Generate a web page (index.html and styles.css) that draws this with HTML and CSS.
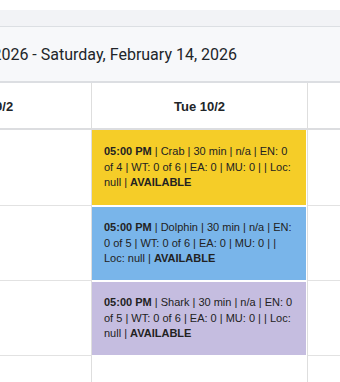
FILE: index.html
```html
<!DOCTYPE html>
<html>
<head>
<meta charset="utf-8">
<link rel="stylesheet" href="styles.css">
</head>
<body>
<div class="toolbar"></div>
<div class="titlebar"><span class="title">Sunday, February 8, 2026 - Saturday, February 14, 2026</span></div>
<div class="calendar">
  <div class="row head">
    <div class="cell c1">Mon 9/2</div>
    <div class="cell c2">Tue 10/2</div>
    <div class="cell c3">Wed 11/2</div>
  </div>
  <div class="row body first">
    <div class="cell c1"></div>
    <div class="cell c2 slot">
      <div class="event crab"><p><b>05:00 PM</b> | Crab | 30 min | n/a | EN: 0 of 4 | WT: 0 of 6 | EA: 0 | MU: 0 | | Loc: null | <b>AVAILABLE</b></p></div>
    </div>
    <div class="cell c3"></div>
  </div>
  <div class="row body">
    <div class="cell c1"></div>
    <div class="cell c2 slot">
      <div class="event dolphin"><p><b>05:00 PM</b> | Dolphin | 30 min | n/a | EN: 0 of 5 | WT: 0 of 6 | EA: 0 | MU: 0 | | Loc: null | <b>AVAILABLE</b></p></div>
    </div>
    <div class="cell c3"></div>
  </div>
  <div class="row body">
    <div class="cell c1"></div>
    <div class="cell c2 slot">
      <div class="event shark"><p><b>05:00 PM</b> | Shark | 30 min | n/a | EN: 0 of 5 | WT: 0 of 6 | EA: 0 | MU: 0 | | Loc: null | <b>AVAILABLE</b></p></div>
    </div>
    <div class="cell c3"></div>
  </div>
  <div class="row body">
    <div class="cell c1"></div>
    <div class="cell c2"></div>
    <div class="cell c3"></div>
  </div>
</div>
</body>
</html>
```

FILE: styles.css
```css
html, body {
  margin: 0;
  padding: 0;
  overflow: hidden;
  background: #ffffff;
}
body {
  font-family: "Liberation Sans", Arial, sans-serif;
  color: #212529;
}
.toolbar {
  margin-top: 10px;
  height: 16px;
  background: #f2f3f6;
  border-bottom: 1px solid #dcdfe3;
}
.titlebar {
  height: 54px;
  background: #f7f8fa;
  border-bottom: 2px solid #dcdee2;
  display: flex;
  justify-content: flex-end;
  align-items: center;
  padding-right: 103px;
}
.title {
  white-space: nowrap;
  font-family: Roboto, "Open Sans", sans-serif;
  font-size: 16px;
  color: #212529;
}
.calendar {
  margin-left: -113px;
  width: 1200px;
}
.row {
  display: grid;
  grid-template-columns: 205px 216px 1fr;
}
.cell {
  border-right: 1px solid #dedede;
  box-sizing: border-box;
}
.head {
  height: 47px;
  border-bottom: 2px solid #dcdde0;
  box-sizing: border-box;
}
.head .cell {
  display: flex;
  align-items: center;
  justify-content: center;
  font-weight: bold;
  font-size: 13px;
  padding-top: 1px;
}
.head .c3 {
  justify-content: flex-start;
  padding-left: 300px;
}
.body {
  height: 75px;
}
.body.first {
  height: 76px;
}
.body .c1, .body .c3 {
  border-bottom: 1px solid #e2e2e2;
}
.slot {
  display: flex;
  padding: 1px 1px 1px 0;
}
.first .slot {
  padding-top: 0;
}
.event {
  flex: 1;
  display: flex;
  align-items: center;
  padding: 0 12px;
}
.event p {
  margin: 0;
  font-size: 11px;
  line-height: 15.5px;
  color: #222222;
}
.crab { background: #f5cd28; }
.dolphin { background: #79b5ea; }
.shark { background: #c5bde0; }
```
